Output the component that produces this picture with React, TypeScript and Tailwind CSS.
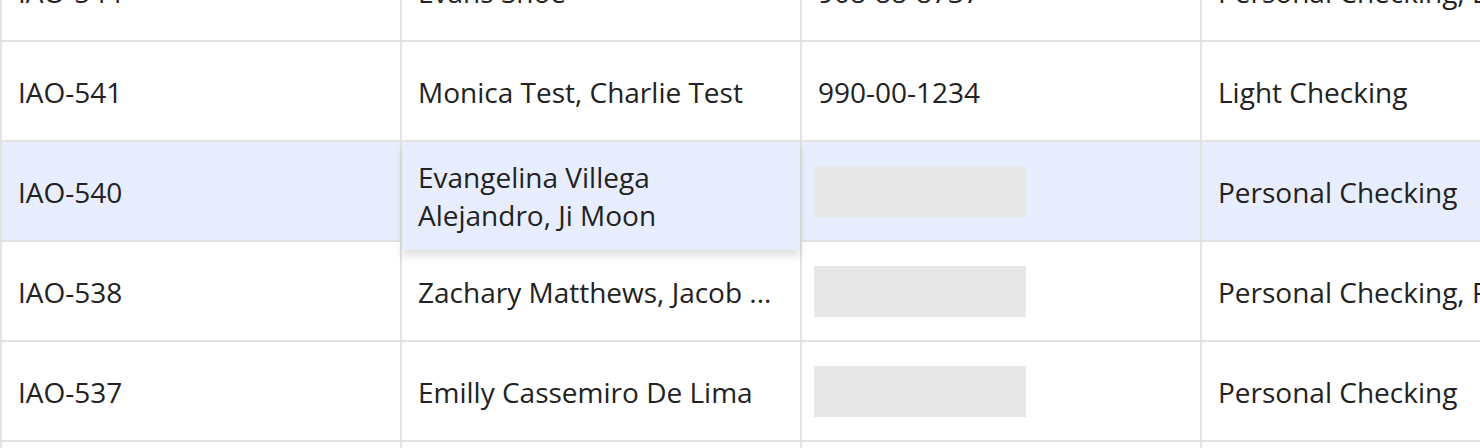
import React from 'react';

type Row = {
  id: string;
  names: string;
  ssn?: string;
  products: string;
  highlight?: boolean;
  expanded?: boolean;
};

const rows: Row[] = [
  { id: 'IAO-544', names: 'Evans Shoe', ssn: '908-88-8737', products: 'Personal Checking, Business Savings' },
  { id: 'IAO-541', names: 'Monica Test, Charlie Test', ssn: '990-00-1234', products: 'Light Checking' },
  { id: 'IAO-540', names: 'Evangelina Villega Alejandro, Ji Moon', products: 'Personal Checking', highlight: true, expanded: true },
  { id: 'IAO-538', names: 'Zachary Matthews, Jacob ...', products: 'Personal Checking, Premium Savings' },
  { id: 'IAO-537', names: 'Emilly Cassemiro De Lima', products: 'Personal Checking' },
  { id: 'IAO-536', names: 'Noah Williams', products: 'Personal Savings' },
];

function Cell({ children, className = '' }: { children?: React.ReactNode; className?: string }) {
  return (
    <div className={`h-[100px] border-l-2 border-t-2 border-[#e2e2e2] flex items-center min-w-0 ${className}`}>
      {children}
    </div>
  );
}

export default function App() {
  return (
    <div className="w-[1480px] h-[448px] overflow-hidden bg-white font-['Open_Sans',sans-serif] text-[28px] text-[#222222]">
      <div className="-mt-[60px] w-[1600px]">
        {rows.map((r) => (
          <div
            key={r.id}
            className={`grid grid-cols-[400px_400px_400px_400px] ${r.highlight ? 'bg-[#e8edfd]' : 'bg-white'}`}
          >
            {/* Case id */}
            <Cell className="px-[16px] pt-[1px]">
              <span className="whitespace-nowrap">{r.id}</span>
            </Cell>

            {/* Applicants */}
            <Cell className="relative px-[16px] pt-[1px]">
              {r.expanded ? (
                <>
                  <span className="whitespace-nowrap invisible">{r.names}</span>
                  <div className="absolute top-0 left-0 w-[398px] z-10 bg-[#e8edfd] px-[16px] pt-[16px] pb-[16px] leading-[38px] shadow-[0_6px_8px_rgba(0,0,0,0.12)]">
                    {r.names}
                  </div>
                </>
              ) : (
                <span className="whitespace-nowrap overflow-hidden">{r.names}</span>
              )}
            </Cell>

            {/* SSN */}
            <Cell className="px-[12px] pt-[1px]">
              {r.ssn ? (
                <span className="whitespace-nowrap pl-[4px]">{r.ssn}</span>
              ) : (
                <div className="w-[212px] h-[51px] bg-[#e7e7e7]" />
              )}
            </Cell>

            {/* Products */}
            <Cell className="px-[16px] pt-[1px]">
              <span className="whitespace-nowrap">{r.products}</span>
            </Cell>
          </div>
        ))}
      </div>
    </div>
  );
}
